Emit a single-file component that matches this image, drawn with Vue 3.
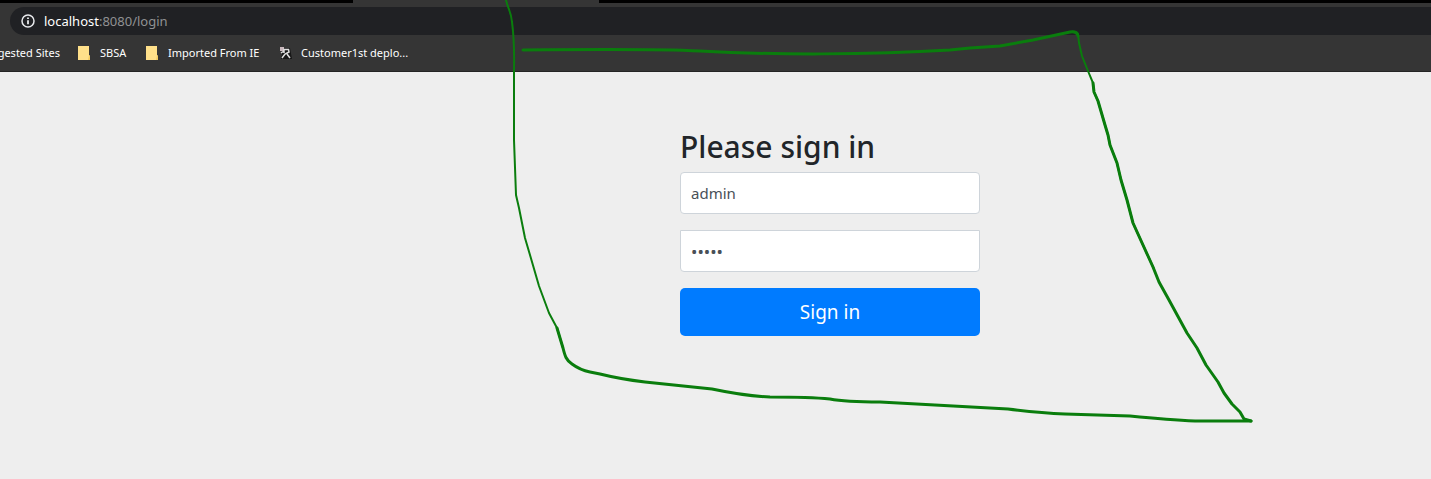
<script setup>
import { ref } from 'vue'

const address = { host: 'localhost', rest: ':8080/login' }
const username = ref('admin')
const password = ref('admin')
</script>

<template>
  <div class="window">
    <header class="browser">
      <div class="tabs"><div class="tab"></div></div>
      <div class="toolbar">
        <div class="address">
          <svg class="info" viewBox="0 0 14 14" aria-hidden="true">
            <circle cx="7" cy="7" r="6" fill="none" stroke="#e8eaed" stroke-width="1.5" />
            <path d="M7 6.2V10.3M7 3.6V5.1" stroke="#e8eaed" stroke-width="1.8" />
          </svg>
          <span class="url">{{ address.host }}<span class="rest">{{ address.rest }}</span></span>
        </div>
      </div>
      <nav class="bookmarks" aria-label="Bookmarks">
        <a class="suggested" href="#"><span>gested Sites</span></a>
        <a class="sbsa" href="#">
          <svg class="folder" viewBox="0 0 14 14" aria-hidden="true">
            <path d="M0 0H11V9L12 10V14H0Z" fill="#ffe08a" />
            <path d="M11 9L10 14H12V10Z" fill="#f3cb62" />
          </svg>
          <span>SBSA</span>
        </a>
        <a class="imported" href="#">
          <svg class="folder" viewBox="0 0 14 14" aria-hidden="true">
            <path d="M0 0H11V9L12 10V14H0Z" fill="#ffe08a" />
            <path d="M11 9L10 14H12V10Z" fill="#f3cb62" />
          </svg>
          <span>Imported From IE</span>
        </a>
        <a class="deploy" href="#">
          <svg class="folder" viewBox="0 0 14 14" aria-hidden="true">
            <path d="M4 2H11L13 13H2Z" fill="#171717" />
            <path d="M1 1H5V5H1Z" fill="#c9b8bd" />
            <path d="M5 7V3.5H9.5L10 6L6 8L3 12M8 8L11 12M5 5L2 7" fill="none" stroke="#dedede" stroke-width="1.5" />
          </svg>
          <span>Customer1st deplo...</span>
        </a>
      </nav>
    </header>

    <main class="page">
      <form class="signin" @submit.prevent>
        <h1>Please sign in</h1>
        <input v-model="username" class="field" type="text" aria-label="Username" autocomplete="off" />
        <input v-model="password" class="field secret" type="password" aria-label="Password" autocomplete="off" />
        <button type="submit">Sign in</button>
      </form>
    </main>

    <svg class="ink" width="1431" height="479" viewBox="0 0 1431 479" aria-hidden="true">
      <path stroke-width="2" d="M506 0C508 9 511 11 512 22C515 45 514 60 514 72V140L516 195L519 208L525 238L530 255L539 286L549 313L557 328L563 348" />
      <path stroke-width="3" d="M557 328L563 348C565 356 566 360 572 364Q580 370 590 372L600 374Q620 379 645 382L712 389Q745 396 770 397Q810 397 830 399Q845 402 880 402L1008 409Q1040 413 1065 414L1130 416Q1170 420 1195 421H1251" />
      <path stroke-width="3" d="M523 50C620 49 660 49 700 51C770 55 870 55 950 50L970 48L1000 46L1033 40L1070 32Q1077 31 1078 36" />
      <path stroke-width="2" d="M1070 32Q1077 31 1078 34L1079 43L1082 56L1088 71L1093 83L1094 92L1098 101L1105 125L1108 135L1110 145L1117 163L1121 180L1127 200L1133 223L1148 256L1154 269" />
      <path stroke-width="3" d="M1093 83L1094 92L1098 101L1105 125L1108 135L1110 145L1117 163L1121 180L1127 200L1133 223L1148 256L1153 267L1159 282L1169 300L1187 333L1197 348L1206 365L1218 382L1224 393L1232 404L1240 412L1244 419L1251 421" />
    </svg>
  </div>
</template>

<style>
html,
body {
  margin: 0;
  background: #eee;
}
</style>

<style scoped>
.window {
  position: relative;
  min-height: 100vh;
  overflow: hidden;
  background: #eee;
  color: #212529;
  font-family: "Segoe UI", "Noto Sans", "Open Sans", sans-serif;
}

* {
  box-sizing: border-box;
}

.browser {
  background: #353535;
  border-bottom: 1px solid #242424;
}

.tabs {
  height: 3px;
  padding-left: 353px;
  background: #000;
}

.tab {
  width: 246px;
  height: 3px;
  background: #353535;
}

.toolbar {
  padding: 4px 0 0 10px;
}

.address {
  display: flex;
  align-items: center;
  gap: 9px;
  height: 28px;
  padding-left: 11px;
  border-radius: 14px 0 0 14px;
  background: #202124;
}

.info {
  width: 14px;
  height: 14px;
}

.url {
  color: #fff;
  font-size: 13px;
  line-height: 20px;
}

.rest {
  color: #909193;
}

.bookmarks {
  display: flex;
  align-items: center;
  height: 36px;
  font-size: 11px;
  line-height: 16px;
  white-space: nowrap;
}

.bookmarks a {
  display: flex;
  align-items: center;
  gap: 8px;
  color: #fff;
  text-decoration: none;
}

.bookmarks .suggested {
  justify-content: flex-end;
  width: 60px;
}

.bookmarks .sbsa {
  width: 68px;
  margin-left: 18px;
}

.bookmarks .imported {
  width: 133px;
}

.folder {
  flex: none;
  width: 14px;
  height: 14px;
}

.page {
  padding: 56px 0 0 229px;
}

.signin {
  display: flex;
  flex-direction: column;
  width: 300px;
  margin: 0 auto;
}

h1 {
  margin: 0 0 6px;
  font-size: 30px;
  font-weight: 500;
  line-height: 38px;
}

.field {
  width: 100%;
  height: 42px;
  margin: 0 0 16px;
  padding: 0 10px;
  border: 1px solid #ced4da;
  border-radius: 4px;
  background: #fff;
  color: #495057;
  font-family: inherit;
  font-size: 15px;
  outline: none;
}

.secret {
  border-radius: 0 0 4px 4px;
  font-size: 17px;
}

button {
  height: 48px;
  padding: 0;
  border: 0;
  border-radius: 5px;
  background: #007bff;
  color: #fff;
  font-family: inherit;
  font-size: 19px;
  line-height: 28px;
}

.ink {
  position: absolute;
  top: 0;
  left: 0;
  pointer-events: none;
}

.ink path {
  fill: none;
  stroke: #0a7d0d;
  stroke-linecap: round;
  stroke-linejoin: round;
}
</style>
